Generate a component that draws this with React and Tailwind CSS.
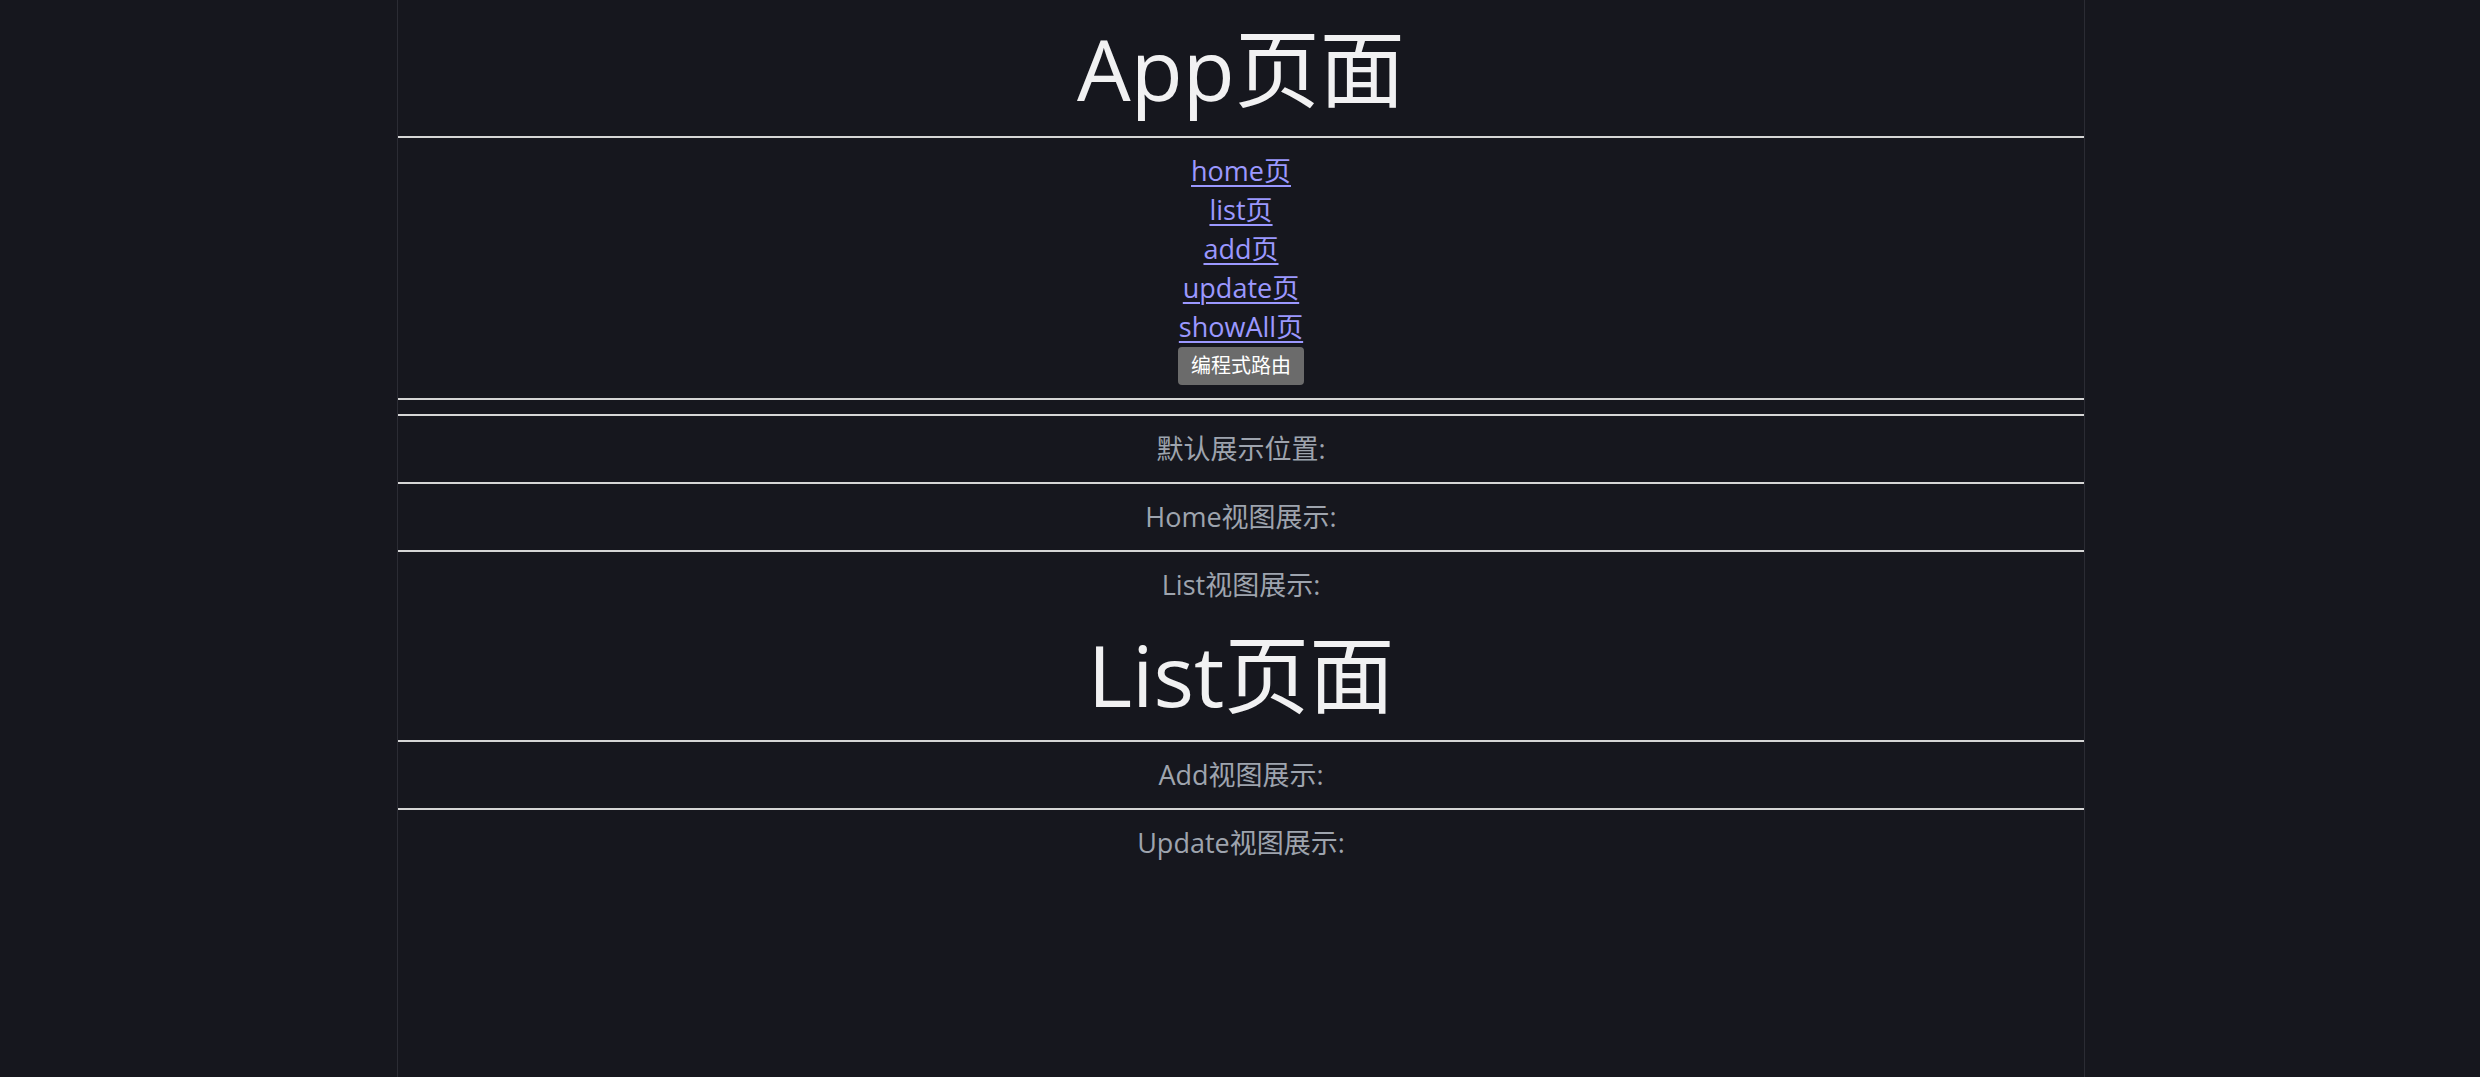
const FONT = '"Open Sans", "Noto Sans CJK SC", sans-serif'

const links = ['home页', 'list页', 'add页', 'update页', 'showAll页']

const Rule = () => <div className="h-[2px] bg-[#d6d6d6]" />

const ViewSlot = ({ label, children }) => (
  <section>
    <Rule />
    <div className="py-[14px]">
      <p className="leading-[38px] text-[#9ea4ae]">{label}</p>
      {children}
    </div>
  </section>
)

const App = () => {
  return (
    <div className="min-h-screen bg-[#16171e] text-[27px]" style={{ fontFamily: FONT }}>
      <div className="ml-[397px] min-h-screen w-[1688px] border-x border-[#2b2c34] text-center">
        <h1 className="pt-[23px] pb-[23px] text-[85px] leading-[90px] text-[#f1f1f2]">App页面</h1>
        <Rule />

        {/* nav links + programmatic route button */}
        <nav className="flex flex-col items-center py-[13px] leading-[39px]">
          {links.map((text) => (
            <a key={text} href="#" className="text-[#9b98ff] underline underline-offset-[4px] decoration-[1.5px]">
              {text}
            </a>
          ))}
          <button className="mt-[1px] h-[38px] rounded-[4px] bg-[#6b6b6b] px-[13px] text-[20px] leading-[38px] text-white">
            编程式路由
          </button>
        </nav>

        <Rule />
        <div className="h-[14px]" />

        <ViewSlot label="默认展示位置:" />
        <ViewSlot label="Home视图展示:" />
        <ViewSlot label="List视图展示:">
          <h1 className="mt-[25px] mb-[7px] text-[85px] leading-[90px] text-[#f1f1f2]">List页面</h1>
        </ViewSlot>
        <ViewSlot label="Add视图展示:" />
        <ViewSlot label="Update视图展示:" />
      </div>
    </div>
  )
}

export default App
